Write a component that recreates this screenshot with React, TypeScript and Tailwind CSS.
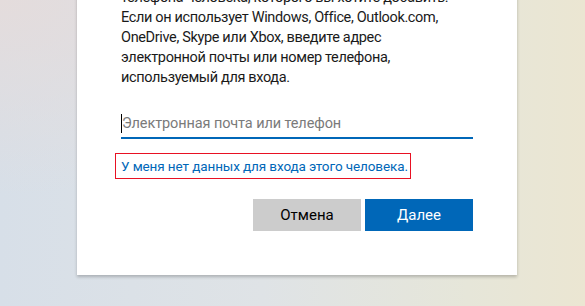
export default function App() {
  const lines = [
    'телефона человека, которого вы хотите добавить.',
    'Если он использует Windows, Office, Outlook.com,',
    'OneDrive, Skype или Xbox, введите адрес',
    'электронной почты или номер телефона,',
    'используемый для входа.',
  ];

  return (
    <div
      className="h-[306px] w-full overflow-hidden bg-[radial-gradient(ellipse_at_0%_0%,#e4dcdc_0%,rgba(228,220,220,0)_45%),linear-gradient(to_right,#d7dfe8_0%,#dfe3e6_45%,#e6e6d9_80%,#ebe6d2_100%)]"
      style={{ fontFamily: '"Segoe UI", Roboto, "Liberation Sans", Arial, sans-serif' }}
    >
      <div className="ml-[77px] -mt-[12px] w-[440px] bg-white px-[44px] pb-[44px] shadow-[0_2px_3px_rgba(0,0,0,0.22)]">
        <p className="text-[14.5px] leading-[20px] tracking-[-0.35px] text-[#1a1a1a]">
          {lines.map((l) => (
            <span key={l} className="block whitespace-nowrap">
              {l}
            </span>
          ))}
        </p>

        <div className="mt-[19px] flex h-[32px] items-center border-b-2 border-[#0067b8] pt-[3px]">
          <span className="h-[19px] w-px bg-black" />
          <span className="text-[14.5px] tracking-[-0.1px] text-[#7a7a7a]">Электронная почта или телефон</span>
        </div>

        <div className="mt-[14px] -ml-[6px] inline-block border border-[#e81123] py-[3px] pl-[5px] pr-[2px] text-[13.5px] leading-[18px] tracking-[-0.1px] text-[#0067b8]">
          У меня нет данных для входа этого человека.
        </div>

        <div className="mt-[20px] flex justify-end gap-[4px]">
          <button className="h-[32px] w-[108px] bg-[#cccccc] text-[15px] text-black">Отмена</button>
          <button className="h-[32px] w-[108px] bg-[#0067b8] text-[15px] text-white">Далее</button>
        </div>
      </div>
    </div>
  );
}
